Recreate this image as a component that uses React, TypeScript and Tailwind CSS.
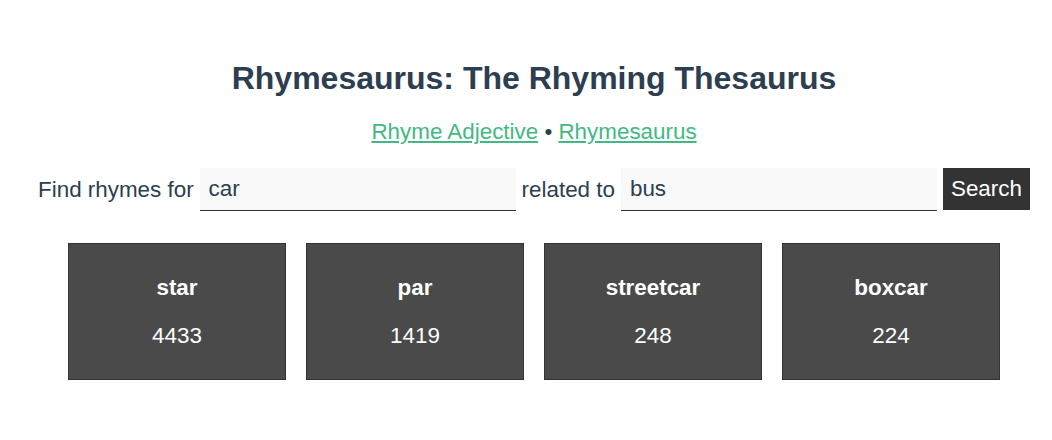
import { useState } from "react"

const results = [
  { word: "star", score: 4433 },
  { word: "par", score: 1419 },
  { word: "streetcar", score: 248 },
  { word: "boxcar", score: 224 },
]

const App = () => {
  const [rhyme, setRhyme] = useState("car")
  const [topic, setTopic] = useState("bus")

  return (
    <div className="min-h-[440px] bg-white pl-4 pt-[60px] text-[#2c3e50] font-['Liberation_Sans',Arial,sans-serif]">
      <h1 className="text-center text-[32px] leading-9 font-bold">Rhymesaurus: The Rhyming Thesaurus</h1>

      <p className="mt-[23px] text-center text-[22.4px] leading-[26px]">
        <a href="#" className="text-[#42b983] underline">Rhyme Adjective</a>
        {" • "}
        <a href="#" className="text-[#42b983] underline">Rhymesaurus</a>
      </p>

      {/* SEARCH */}
      <form className="mt-[23px] flex items-center justify-center gap-[6px] text-[22.4px]" onSubmit={e => e.preventDefault()}>
        <label>Find rhymes for</label>
        <input
          value={rhyme}
          onChange={e => setRhyme(e.target.value)}
          className="h-[43px] w-[316px] border-b border-[#333] bg-[#f9f9f9] px-[9px] text-[22.4px] text-[#2c3e50] outline-none"
        />
        <label>related to</label>
        <input
          value={topic}
          onChange={e => setTopic(e.target.value)}
          className="h-[43px] w-[316px] border-b border-[#333] bg-[#f9f9f9] px-[9px] text-[22.4px] text-[#2c3e50] outline-none"
        />
        <button type="submit" className="h-[42px] self-start bg-[#333] px-2 text-[22.4px] text-white">Search</button>
      </form>

      {/* RESULTS */}
      <div className="mt-[32px] flex justify-center gap-5">
        {results.map(item => (
          <div key={item.word} className="flex h-[137px] w-[218px] flex-col items-center border border-[#333] bg-[#4a4a4a] pt-[31px] text-[22.4px] text-white">
            <span className="font-bold leading-[26px]">{item.word}</span>
            <span className="mt-[22px] leading-[26px]">{item.score}</span>
          </div>
        ))}
      </div>
    </div>
  )
}

export default App
